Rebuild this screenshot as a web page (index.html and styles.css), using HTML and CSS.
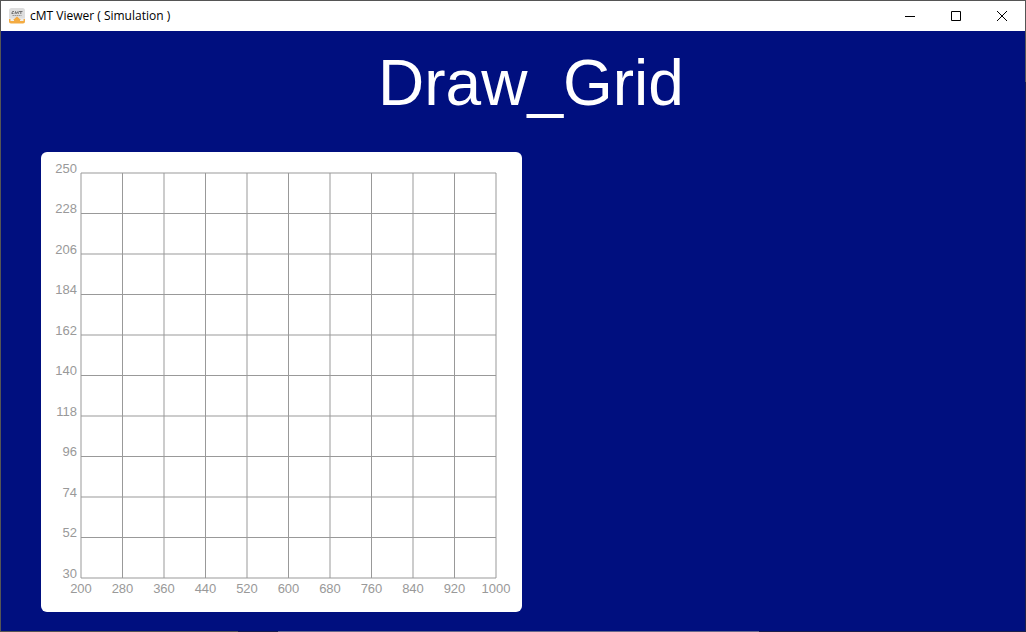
FILE: index.html
```html
<!DOCTYPE html>
<html lang="en">
<head>
<meta charset="utf-8">
<title>cMT Viewer ( Simulation )</title>
<link rel="stylesheet" href="styles.css">
</head>
<body>
<div class="window">
  <header class="titlebar">
    <svg class="app-icon" viewBox="0 0 16 16" aria-hidden="true">
      <rect x="0" y="0" width="16" height="15" rx="2.500" fill="#dedede"/>
      <path d="M5 3.500H3.500L2.800 5.500H4.500M6 6l.5-2.500L7.500 5.500 9 3.500 9.300 6M10 3.500h3.500M11.800 3.500V6" stroke="#666" stroke-width=".9" fill="none"/>
      <path d="M3.500 7.500h9" stroke="#999" stroke-width="1.200" stroke-dasharray="1.500 .5"/>
      <path d="M0 10.500h16V14H0z" fill="#eee"/>
      <path d="M0 11h1.500v2H5V12H4l4-3.500 4 3.500h-1v1h3.500v-2H16v2.500a2 2 0 0 1-2 2H2a2 2 0 0 1-2-2z" fill="#f3ab42"/>
    </svg>
    <span class="caption">cMT Viewer ( Simulation )</span>
    <div class="controls">
      <button class="control" type="button" aria-label="Minimize"><svg viewBox="0 0 10 10"><path d="M0 5.500h10"/></svg></button>
      <button class="control" type="button" aria-label="Maximize"><svg viewBox="0 0 10 10"><path d="M.5.5h9v9h-9z"/></svg></button>
      <button class="control" type="button" aria-label="Close"><svg viewBox="0 0 10 10"><path d="M0 0l10 10M10 0L0 10"/></svg></button>
    </div>
  </header>
  <main class="screen">
    <h1 class="heading">Draw_Grid</h1>
    <section class="card" aria-label="Grid">
      <svg class="chart" id="chart" viewBox="0 0 481 460" role="img" aria-label="Grid from 200 to 1000 by 30 to 250"></svg>
    </section>
  </main>
  <div class="bottom-edge"></div>
</div>
<script src="grid.js"></script>
</body>
</html>
```
FILE: styles.css
```css
* { box-sizing: border-box; }
html, body { height: 100%; }
body { margin: 0; font-family: "Liberation Sans", Arial, sans-serif; }
.window {
  display: flex;
  flex-direction: column;
  min-height: 100%;
  background: linear-gradient(#555 81px, #1b1f4c 81px);
  border-top: 1px solid #555;
  border-left: 1px solid #555;
}
.titlebar {
  display: flex;
  align-items: center;
  height: 30px;
  margin-right: 1px;
  padding-left: 8px;
  gap: 5px;
  background: #fff;
}
.app-icon { width: 16px; height: 16px; }
.caption {
  flex: 1;
  font: 12px/16px "Open Sans", "Noto Sans", sans-serif;
  color: #000;
}
.controls { display: flex; align-self: stretch; }
.control {
  display: grid;
  place-items: center;
  width: 46px;
  padding: 0;
  border: 0;
  background: none;
}
.control svg { width: 10px; height: 10px; fill: none; stroke: #000; }
.screen {
  flex: 1;
  margin-right: 1px;
  padding: 16px 40px 19px;
  background: #000f7f;
}
.heading {
  margin: 0;
  padding-left: 36px;
  font-size: 64px;
  line-height: 72px;
  font-weight: 400;
  text-align: center;
  color: #fff;
}
.card {
  width: 481px;
  max-width: 100%;
  margin-top: 33px;
  background: #fff;
  border-radius: 6px;
}
.chart { display: block; width: 100%; height: auto; }
.grid-line { stroke: #999; stroke-width: 1; }
.tick { font-size: 13px; fill: #999; }
.tick-y { text-anchor: end; }
.tick-x { text-anchor: middle; }
.bottom-edge {
  height: 1px;
  background: linear-gradient(90deg, #555 237px, #1b1f4c 237px 277px, #66688c 277px 758px, #1b1f4c 758px);
}
```
FILE: grid.js
```js
const plot = { left: 40, top: 21, width: 415, height: 405, divisions: 10 };
const axis = { xMin: 200, xMax: 1000, yMin: 30, yMax: 250 };
const chart = document.getElementById("chart");

function add(name, attributes, text) {
  const node = document.createElementNS("http://www.w3.org/2000/svg", name);
  for (const key in attributes) node.setAttribute(key, attributes[key]);
  if (text !== undefined) node.textContent = text;
  chart.appendChild(node);
}

for (let i = 0; i <= plot.divisions; i++) {
  const share = i / plot.divisions;
  const x = plot.left + plot.width * share;
  const y = plot.top + plot.height * share;
  const right = plot.left + plot.width;
  const bottom = plot.top + plot.height;
  add("line", { class: "grid-line", x1: x, x2: x, y1: plot.top, y2: bottom });
  add("line", { class: "grid-line", x1: plot.left, x2: right, y1: y, y2: y });
  add("text", { class: "tick tick-x", x: x, y: bottom + 15 }, axis.xMin + (axis.xMax - axis.xMin) * share);
  add("text", { class: "tick tick-y", x: plot.left - 4, y: Math.floor(y) }, Math.round(axis.yMax - (axis.yMax - axis.yMin) * share));
}
```
